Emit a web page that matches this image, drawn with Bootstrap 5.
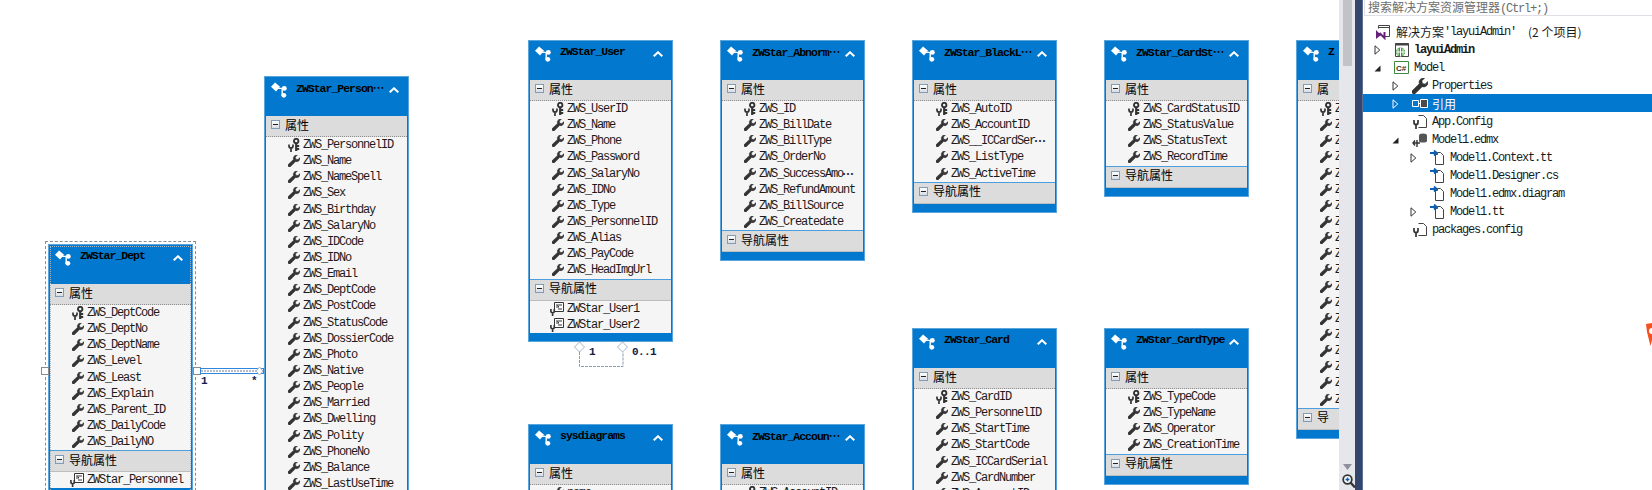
<!DOCTYPE html>
<html lang="zh-CN">
<head>
<meta charset="utf-8">
<title>Model1.edmx</title>
<link href="https://cdn.jsdelivr.net/npm/bootstrap@5.3.0/dist/css/bootstrap.min.css" rel="stylesheet">
<style>
html,body{height:490px;overflow:hidden;background:#fff}
body{font-family:"Liberation Mono","Noto Sans CJK SC",monospace;font-size:12px;letter-spacing:-1.2px;line-height:1;color:#111}
.shell{width:1652px;height:490px}
.canvas-area{width:1339px;height:490px}
.ent{width:145px;background:#0279cf;border:1px solid #5aa5dc;padding:0 1px 8px}
.at-dept{left:48px;top:244px}.at-person{left:264px;top:76px}.at-user{left:528px;top:40px}
.at-abn{left:720px;top:40px}.at-black{left:912px;top:40px}.at-cardst{left:1104px;top:40px}
.at-right{left:1296px;top:40px}.at-card{left:912px;top:328px}.at-cardtype{left:1104px;top:328px}
.at-sys{left:528px;top:424px}.at-acct{left:720px;top:424px}
.sel-frame{left:45px;top:241px;width:151px;height:260px;border:1px dashed #8d8d8d}
.sel-inner{left:50px;top:246px;width:141px;height:250px;border:1px dotted #a9b6c2}
.head{height:39px;padding:5px 0 0 5px}
.glyph{width:16px;height:16px;flex:none}
.title{width:93px;margin:0 0 0 9px;font-weight:700;color:#000;font-size:11.5px;letter-spacing:-1px;height:13px;flex:none}
.chev{width:10px;height:6px;margin:5px 0 0 0;flex:none}
.sec{height:17px;padding:0 0 3px 5px;background:#dcdcdc;font-family:"Noto Sans CJK SC",sans-serif;font-size:12px;letter-spacing:0;color:#000;border-bottom:1px dotted #8f8f8f;box-sizing:content-box}
.sec2{border-top:1px solid #4c9fdc;border-bottom:1px solid #bdbdbd}
.minus{width:9px;height:9px;border:1px solid #7f9db9;background:linear-gradient(#fff,#d8dde3);margin-right:5px;flex:none}
.minus::before{content:"";width:5px;height:1px;background:#222}
.rows{background:#f5f5f5}
.rw{height:16.15px;padding-left:22px;color:#1b1b1b;white-space:nowrap}
.ic{width:12px;height:12px;margin-right:3px;flex:none}
.ick{width:12px;height:14px;margin-right:3px;flex:none}
.icn{width:14px;height:14px;margin:0 3px 0 -2px;flex:none}
.dots{font-family:"Noto Sans CJK SC",sans-serif;letter-spacing:0;font-weight:700;margin-left:-1px}
.ttl-dots{font-family:"Noto Sans CJK SC",sans-serif;letter-spacing:0}
.overlay{left:0;top:0;width:1339px;height:490px;pointer-events:none}
.lbl{font-size:11px;font-weight:700;fill:#10204a;letter-spacing:-.6px;font-family:"Liberation Mono",monospace}
.vbar{width:16px;height:490px;background:#e6e7ed;padding-left:4px}
.thumb{width:9px;height:66px;background:#c2c3c9}
.arr-d{left:4px;top:464px;width:9px;height:6px}
.zoom-i{left:3px;top:474px;width:14px;height:15px}
.split{width:8px;height:490px;background:#35466d;border-right:1px solid #5c6f97}
.expl{width:289px;height:490px;background:#fff}
.sbox{height:16px;margin-left:1px;padding:0 0 0 3px;border:1px solid #dfe0e6;border-top:0;border-right:0;color:#6d6d6d;font-size:12px;line-height:14px}
.cj{font-family:"Noto Sans CJK SC",sans-serif;letter-spacing:0}
.tree{margin-top:6px}
.ti{height:18px;padding-top:2px;white-space:nowrap;color:#1a1a1a}
.lv0{padding-left:11px}.lv1{padding-left:29px}.lv2{padding-left:47px}.lvs{padding-left:11px}
.tw{width:18px;height:16px;flex:none}
.tw svg{width:7px;height:10px}
.tic{width:22px;height:16px;flex:none;padding-left:2px}
.tic svg{width:16px;height:16px}
.tisel{background:#0279cf;color:#fff}
.tb{font-weight:700}
.tgap{margin-left:12px}
.orange{right:0;top:323px;width:6px;height:23px}
</style>
</head>
<body>
<svg width="0" height="0" class="position-absolute">
<symbol id="w" viewBox="0 0 12 12"><path fill="#333" stroke="#333" stroke-width=".5" d="M8.600 0a3.300 3.300 0 0 0-3.100 4.400L.4 9.300a1.500 1.500 0 0 0 2.200 2.200L7.600 6.500A3.300 3.300 0 0 0 11.900 2.600L9.900 4.600 7.800 4.200 7.400 2.100 9.400.1A3 3 0 0 0 8.600 0z"/></symbol>
<symbol id="k" viewBox="0 0 12 14"><g fill="none" stroke="#333"><circle cx="8.200" cy="3" r="2.200" stroke-width="1.900"/><path stroke-width="2.200" d="M8.200 5v8M8.200 8h3M8.200 11h3"/><path stroke-width="1.700" d="M1 6.500v1.600a2 2 0 0 0 4 0V6.500M3 10v4"/></g></symbol>
<symbol id="n" viewBox="0 0 14 14"><g fill="none" stroke="#333"><path fill="#fff" d="M4.500.5h9v9h-9z"/><path d="M6 3h6M6 5h3L7.500 3.500M8 7h4"/><path stroke-width="1.600" d="M.9 7v2a1.700 1.700 0 0 0 3.400 0V7M2.600 10.500V14"/></g></symbol>
<symbol id="g" viewBox="0 0 15 15"><g fill="#fff"><path d="M0 4.500 3.800.5l4.700 4-3.800 4.500z"/><circle cx="12.500" cy="6" r="2.300"/><circle cx="12" cy="12.500" r="2.300"/></g><path fill="none" stroke="#fff" stroke-width="1.300" d="M6 6h6M10.500 6v6.500"/></symbol>
<symbol id="c" viewBox="0 0 10 6"><path fill="none" stroke="#fff" stroke-width="2" d="M.7 5.300 5 1.300l4.300 4"/></symbol>
<symbol id="to" viewBox="0 0 7 10"><path fill="#fff" stroke="#333" d="M1 .8v8.400L5.800 5z"/></symbol>
<symbol id="tw" viewBox="0 0 7 10"><path fill="none" stroke="#fff" d="M1 .8v8.400L5.800 5z"/></symbol>
<symbol id="tf" viewBox="0 0 7 10"><path fill="#222" d="M.5 8.500 6.500 2.500v6z"/></symbol>
<symbol id="fl" viewBox="0 0 16 16"><path fill="#fff" stroke="#444" d="M6.500 1.500h5l3 3v9h-8"/><path fill="none" stroke="#333" stroke-width="1.700" d="M2 6v2.500a2 2 0 0 0 4 0V6M4 11v4"/></symbol>
<symbol id="tt" viewBox="0 0 16 16"><path fill="#fff" stroke="#444" d="M5.500 4.500h2V2.500h3l3 3v9h-8z"/><path fill="none" stroke="#0f5fb0" stroke-width="1.800" d="M0 3h6M4 .5 6.800 3 4 5.500"/></symbol>
</svg>
<div class="shell d-flex">
<main class="canvas-area position-relative overflow-hidden flex-none">
<div class="position-absolute sel-frame"></div>
<section class="ent position-absolute at-dept">
<div class="head d-flex"><svg class="glyph"><use href="#g"/></svg><div class="title text-nowrap">ZWStar_Dept</div><svg class="chev"><use href="#c"/></svg></div>
<div class="sec d-flex align-items-center"><span class="minus d-flex align-items-center justify-content-center"></span>属性</div>
<div class="rows">
<div class="rw d-flex align-items-center"><svg class="ick"><use href="#k"/></svg>ZWS_DeptCode</div>
<div class="rw d-flex align-items-center"><svg class="ic"><use href="#w"/></svg>ZWS_DeptNo</div>
<div class="rw d-flex align-items-center"><svg class="ic"><use href="#w"/></svg>ZWS_DeptName</div>
<div class="rw d-flex align-items-center"><svg class="ic"><use href="#w"/></svg>ZWS_Level</div>
<div class="rw d-flex align-items-center"><svg class="ic"><use href="#w"/></svg>ZWS_Least</div>
<div class="rw d-flex align-items-center"><svg class="ic"><use href="#w"/></svg>ZWS_Explain</div>
<div class="rw d-flex align-items-center"><svg class="ic"><use href="#w"/></svg>ZWS_Parent_ID</div>
<div class="rw d-flex align-items-center"><svg class="ic"><use href="#w"/></svg>ZWS_DailyCode</div>
<div class="rw d-flex align-items-center"><svg class="ic"><use href="#w"/></svg>ZWS_DailyNO</div>
</div>
<div class="sec sec2 d-flex align-items-center"><span class="minus d-flex align-items-center justify-content-center"></span>导航属性</div>
<div class="rows">
<div class="rw d-flex align-items-center"><svg class="icn"><use href="#n"/></svg>ZWStar_Personnel</div>
</div>
</section>
<div class="position-absolute sel-inner"></div>
<section class="ent position-absolute at-person">
<div class="head d-flex"><svg class="glyph"><use href="#g"/></svg><div class="title text-nowrap">ZWStar_Person<span class="ttl-dots">…</span></div><svg class="chev"><use href="#c"/></svg></div>
<div class="sec d-flex align-items-center"><span class="minus d-flex align-items-center justify-content-center"></span>属性</div>
<div class="rows">
<div class="rw d-flex align-items-center"><svg class="ick"><use href="#k"/></svg>ZWS_PersonnelID</div>
<div class="rw d-flex align-items-center"><svg class="ic"><use href="#w"/></svg>ZWS_Name</div>
<div class="rw d-flex align-items-center"><svg class="ic"><use href="#w"/></svg>ZWS_NameSpell</div>
<div class="rw d-flex align-items-center"><svg class="ic"><use href="#w"/></svg>ZWS_Sex</div>
<div class="rw d-flex align-items-center"><svg class="ic"><use href="#w"/></svg>ZWS_Birthday</div>
<div class="rw d-flex align-items-center"><svg class="ic"><use href="#w"/></svg>ZWS_SalaryNo</div>
<div class="rw d-flex align-items-center"><svg class="ic"><use href="#w"/></svg>ZWS_IDCode</div>
<div class="rw d-flex align-items-center"><svg class="ic"><use href="#w"/></svg>ZWS_IDNo</div>
<div class="rw d-flex align-items-center"><svg class="ic"><use href="#w"/></svg>ZWS_Email</div>
<div class="rw d-flex align-items-center"><svg class="ic"><use href="#w"/></svg>ZWS_DeptCode</div>
<div class="rw d-flex align-items-center"><svg class="ic"><use href="#w"/></svg>ZWS_PostCode</div>
<div class="rw d-flex align-items-center"><svg class="ic"><use href="#w"/></svg>ZWS_StatusCode</div>
<div class="rw d-flex align-items-center"><svg class="ic"><use href="#w"/></svg>ZWS_DossierCode</div>
<div class="rw d-flex align-items-center"><svg class="ic"><use href="#w"/></svg>ZWS_Photo</div>
<div class="rw d-flex align-items-center"><svg class="ic"><use href="#w"/></svg>ZWS_Native</div>
<div class="rw d-flex align-items-center"><svg class="ic"><use href="#w"/></svg>ZWS_People</div>
<div class="rw d-flex align-items-center"><svg class="ic"><use href="#w"/></svg>ZWS_Married</div>
<div class="rw d-flex align-items-center"><svg class="ic"><use href="#w"/></svg>ZWS_Dwelling</div>
<div class="rw d-flex align-items-center"><svg class="ic"><use href="#w"/></svg>ZWS_Polity</div>
<div class="rw d-flex align-items-center"><svg class="ic"><use href="#w"/></svg>ZWS_PhoneNo</div>
<div class="rw d-flex align-items-center"><svg class="ic"><use href="#w"/></svg>ZWS_Balance</div>
<div class="rw d-flex align-items-center"><svg class="ic"><use href="#w"/></svg>ZWS_LastUseTime</div>
</div>
</section>
<section class="ent position-absolute at-user">
<div class="head d-flex"><svg class="glyph"><use href="#g"/></svg><div class="title text-nowrap">ZWStar_User</div><svg class="chev"><use href="#c"/></svg></div>
<div class="sec d-flex align-items-center"><span class="minus d-flex align-items-center justify-content-center"></span>属性</div>
<div class="rows">
<div class="rw d-flex align-items-center"><svg class="ick"><use href="#k"/></svg>ZWS_UserID</div>
<div class="rw d-flex align-items-center"><svg class="ic"><use href="#w"/></svg>ZWS_Name</div>
<div class="rw d-flex align-items-center"><svg class="ic"><use href="#w"/></svg>ZWS_Phone</div>
<div class="rw d-flex align-items-center"><svg class="ic"><use href="#w"/></svg>ZWS_Password</div>
<div class="rw d-flex align-items-center"><svg class="ic"><use href="#w"/></svg>ZWS_SalaryNo</div>
<div class="rw d-flex align-items-center"><svg class="ic"><use href="#w"/></svg>ZWS_IDNo</div>
<div class="rw d-flex align-items-center"><svg class="ic"><use href="#w"/></svg>ZWS_Type</div>
<div class="rw d-flex align-items-center"><svg class="ic"><use href="#w"/></svg>ZWS_PersonnelID</div>
<div class="rw d-flex align-items-center"><svg class="ic"><use href="#w"/></svg>ZWS_Alias</div>
<div class="rw d-flex align-items-center"><svg class="ic"><use href="#w"/></svg>ZWS_PayCode</div>
<div class="rw d-flex align-items-center"><svg class="ic"><use href="#w"/></svg>ZWS_HeadImgUrl</div>
</div>
<div class="sec sec2 d-flex align-items-center"><span class="minus d-flex align-items-center justify-content-center"></span>导航属性</div>
<div class="rows">
<div class="rw d-flex align-items-center"><svg class="icn"><use href="#n"/></svg>ZWStar_User1</div>
<div class="rw d-flex align-items-center"><svg class="icn"><use href="#n"/></svg>ZWStar_User2</div>
</div>
</section>
<section class="ent position-absolute at-abn">
<div class="head d-flex"><svg class="glyph"><use href="#g"/></svg><div class="title text-nowrap">ZWStar_Abnorm<span class="ttl-dots">…</span></div><svg class="chev"><use href="#c"/></svg></div>
<div class="sec d-flex align-items-center"><span class="minus d-flex align-items-center justify-content-center"></span>属性</div>
<div class="rows">
<div class="rw d-flex align-items-center"><svg class="ick"><use href="#k"/></svg>ZWS_ID</div>
<div class="rw d-flex align-items-center"><svg class="ic"><use href="#w"/></svg>ZWS_BillDate</div>
<div class="rw d-flex align-items-center"><svg class="ic"><use href="#w"/></svg>ZWS_BillType</div>
<div class="rw d-flex align-items-center"><svg class="ic"><use href="#w"/></svg>ZWS_OrderNo</div>
<div class="rw d-flex align-items-center"><svg class="ic"><use href="#w"/></svg>ZWS_SuccessAmo<span class="dots">…</span></div>
<div class="rw d-flex align-items-center"><svg class="ic"><use href="#w"/></svg>ZWS_RefundAmount</div>
<div class="rw d-flex align-items-center"><svg class="ic"><use href="#w"/></svg>ZWS_BillSource</div>
<div class="rw d-flex align-items-center"><svg class="ic"><use href="#w"/></svg>ZWS_Createdate</div>
</div>
<div class="sec sec2 d-flex align-items-center"><span class="minus d-flex align-items-center justify-content-center"></span>导航属性</div>
</section>
<section class="ent position-absolute at-black">
<div class="head d-flex"><svg class="glyph"><use href="#g"/></svg><div class="title text-nowrap">ZWStar_BlackL<span class="ttl-dots">…</span></div><svg class="chev"><use href="#c"/></svg></div>
<div class="sec d-flex align-items-center"><span class="minus d-flex align-items-center justify-content-center"></span>属性</div>
<div class="rows">
<div class="rw d-flex align-items-center"><svg class="ick"><use href="#k"/></svg>ZWS_AutoID</div>
<div class="rw d-flex align-items-center"><svg class="ic"><use href="#w"/></svg>ZWS_AccountID</div>
<div class="rw d-flex align-items-center"><svg class="ic"><use href="#w"/></svg>ZWS__ICCardSer<span class="dots">…</span></div>
<div class="rw d-flex align-items-center"><svg class="ic"><use href="#w"/></svg>ZWS_ListType</div>
<div class="rw d-flex align-items-center"><svg class="ic"><use href="#w"/></svg>ZWS_ActiveTime</div>
</div>
<div class="sec sec2 d-flex align-items-center"><span class="minus d-flex align-items-center justify-content-center"></span>导航属性</div>
</section>
<section class="ent position-absolute at-cardst">
<div class="head d-flex"><svg class="glyph"><use href="#g"/></svg><div class="title text-nowrap">ZWStar_CardSt<span class="ttl-dots">…</span></div><svg class="chev"><use href="#c"/></svg></div>
<div class="sec d-flex align-items-center"><span class="minus d-flex align-items-center justify-content-center"></span>属性</div>
<div class="rows">
<div class="rw d-flex align-items-center"><svg class="ick"><use href="#k"/></svg>ZWS_CardStatusID</div>
<div class="rw d-flex align-items-center"><svg class="ic"><use href="#w"/></svg>ZWS_StatusValue</div>
<div class="rw d-flex align-items-center"><svg class="ic"><use href="#w"/></svg>ZWS_StatusText</div>
<div class="rw d-flex align-items-center"><svg class="ic"><use href="#w"/></svg>ZWS_RecordTime</div>
</div>
<div class="sec sec2 d-flex align-items-center"><span class="minus d-flex align-items-center justify-content-center"></span>导航属性</div>
</section>
<section class="ent position-absolute at-right">
<div class="head d-flex"><svg class="glyph"><use href="#g"/></svg><div class="title text-nowrap">Z</div><svg class="chev"><use href="#c"/></svg></div>
<div class="sec d-flex align-items-center"><span class="minus d-flex align-items-center justify-content-center"></span>属</div>
<div class="rows">
<div class="rw d-flex align-items-center"><svg class="ick"><use href="#k"/></svg>Z</div>
<div class="rw d-flex align-items-center"><svg class="ic"><use href="#w"/></svg>Z</div>
<div class="rw d-flex align-items-center"><svg class="ic"><use href="#w"/></svg>Z</div>
<div class="rw d-flex align-items-center"><svg class="ic"><use href="#w"/></svg>Z</div>
<div class="rw d-flex align-items-center"><svg class="ic"><use href="#w"/></svg>Z</div>
<div class="rw d-flex align-items-center"><svg class="ic"><use href="#w"/></svg>Z</div>
<div class="rw d-flex align-items-center"><svg class="ic"><use href="#w"/></svg>Z</div>
<div class="rw d-flex align-items-center"><svg class="ic"><use href="#w"/></svg>Z</div>
<div class="rw d-flex align-items-center"><svg class="ic"><use href="#w"/></svg>Z</div>
<div class="rw d-flex align-items-center"><svg class="ic"><use href="#w"/></svg>Z</div>
<div class="rw d-flex align-items-center"><svg class="ic"><use href="#w"/></svg>Z</div>
<div class="rw d-flex align-items-center"><svg class="ic"><use href="#w"/></svg>Z</div>
<div class="rw d-flex align-items-center"><svg class="ic"><use href="#w"/></svg>Z</div>
<div class="rw d-flex align-items-center"><svg class="ic"><use href="#w"/></svg>Z</div>
<div class="rw d-flex align-items-center"><svg class="ic"><use href="#w"/></svg>Z</div>
<div class="rw d-flex align-items-center"><svg class="ic"><use href="#w"/></svg>Z</div>
<div class="rw d-flex align-items-center"><svg class="ic"><use href="#w"/></svg>Z</div>
<div class="rw d-flex align-items-center"><svg class="ic"><use href="#w"/></svg>Z</div>
<div class="rw d-flex align-items-center"><svg class="ic"><use href="#w"/></svg>Z</div>
</div>
<div class="sec sec2 d-flex align-items-center"><span class="minus d-flex align-items-center justify-content-center"></span>导</div>
</section>
<section class="ent position-absolute at-card">
<div class="head d-flex"><svg class="glyph"><use href="#g"/></svg><div class="title text-nowrap">ZWStar_Card</div><svg class="chev"><use href="#c"/></svg></div>
<div class="sec d-flex align-items-center"><span class="minus d-flex align-items-center justify-content-center"></span>属性</div>
<div class="rows">
<div class="rw d-flex align-items-center"><svg class="ick"><use href="#k"/></svg>ZWS_CardID</div>
<div class="rw d-flex align-items-center"><svg class="ic"><use href="#w"/></svg>ZWS_PersonnelID</div>
<div class="rw d-flex align-items-center"><svg class="ic"><use href="#w"/></svg>ZWS_StartTime</div>
<div class="rw d-flex align-items-center"><svg class="ic"><use href="#w"/></svg>ZWS_StartCode</div>
<div class="rw d-flex align-items-center"><svg class="ic"><use href="#w"/></svg>ZWS_ICCardSerial</div>
<div class="rw d-flex align-items-center"><svg class="ic"><use href="#w"/></svg>ZWS_CardNumber</div>
<div class="rw d-flex align-items-center"><svg class="ic"><use href="#w"/></svg>ZWS_AccountID</div>
<div class="rw d-flex align-items-center"></div>
</div>
</section>
<section class="ent position-absolute at-cardtype">
<div class="head d-flex"><svg class="glyph"><use href="#g"/></svg><div class="title text-nowrap">ZWStar_CardType</div><svg class="chev"><use href="#c"/></svg></div>
<div class="sec d-flex align-items-center"><span class="minus d-flex align-items-center justify-content-center"></span>属性</div>
<div class="rows">
<div class="rw d-flex align-items-center"><svg class="ick"><use href="#k"/></svg>ZWS_TypeCode</div>
<div class="rw d-flex align-items-center"><svg class="ic"><use href="#w"/></svg>ZWS_TypeName</div>
<div class="rw d-flex align-items-center"><svg class="ic"><use href="#w"/></svg>ZWS_Operator</div>
<div class="rw d-flex align-items-center"><svg class="ic"><use href="#w"/></svg>ZWS_CreationTime</div>
</div>
<div class="sec sec2 d-flex align-items-center"><span class="minus d-flex align-items-center justify-content-center"></span>导航属性</div>
</section>
<section class="ent position-absolute at-sys">
<div class="head d-flex"><svg class="glyph"><use href="#g"/></svg><div class="title text-nowrap">sysdiagrams</div><svg class="chev"><use href="#c"/></svg></div>
<div class="sec d-flex align-items-center"><span class="minus d-flex align-items-center justify-content-center"></span>属性</div>
<div class="rows">
<div class="rw d-flex align-items-center"><svg class="ic"><use href="#w"/></svg>name</div>
<div class="rw d-flex align-items-center"></div>
</div>
</section>
<section class="ent position-absolute at-acct">
<div class="head d-flex"><svg class="glyph"><use href="#g"/></svg><div class="title text-nowrap">ZWStar_Accoun<span class="ttl-dots">…</span></div><svg class="chev"><use href="#c"/></svg></div>
<div class="sec d-flex align-items-center"><span class="minus d-flex align-items-center justify-content-center"></span>属性</div>
<div class="rows">
<div class="rw d-flex align-items-center"><svg class="ick"><use href="#k"/></svg>ZWS_AccountID</div>
<div class="rw d-flex align-items-center"></div>
</div>
</section>
<svg class="overlay position-absolute" viewBox="0 0 1339 490">
<g fill="#fff" stroke="#8a8a8a"><rect x="41.500" y="367.500" width="7" height="7"/><rect x="193.500" y="367.500" width="7" height="7"/></g>
<rect x="200.500" y="368.500" width="63" height="5" fill="#fff" stroke="#2f86dc"/>
<path d="M201 371h56" stroke="#b4bcc6" stroke-width="2" stroke-dasharray="2 1"/>
<path d="M259.500 367l3.500 4-3.500 4-3.500-4z" fill="#fff" stroke="#9fb2c6"/>
<text class="lbl" x="201" y="384">1</text><text class="lbl" x="251" y="384">*</text>
<path d="M579.500 352v14.500h43.500V352" fill="none" stroke="#8a9bb0" stroke-dasharray="3 1"/>
<g fill="#fff" stroke="#a7b4c3"><path d="M579.500 342l5 5-5 5-5-5z"/><path d="M622.500 342l5 5-5 5-5-5z"/></g>
<text class="lbl" x="589" y="355">1</text><text class="lbl" x="632" y="355">0..1</text>
</svg>
</main>
<div class="vbar position-relative flex-none">
<div class="thumb"></div>
<svg class="arr-d position-absolute" viewBox="0 0 9 6"><path fill="#8f909c" d="M0 0h9L4.500 6z"/></svg>
<svg class="zoom-i position-absolute" viewBox="0 0 14 15"><circle cx="5.500" cy="5.500" r="4.300" fill="#fff" stroke="#333" stroke-width="1.800"/><path stroke="#333" stroke-width="2.400" d="M8.500 8.500l4.500 5"/><path stroke="#0f5fb0" stroke-width="1.500" d="M3.500 5.500h4M5.500 3.500v4"/></svg>
</div>
<div class="split flex-none"></div>
<aside class="expl position-relative flex-none">
<div class="sbox"><span class="cj">搜索解决方案资源管理器</span>(Ctrl+;)</div>
<div class="tree">
<div class="ti lvs d-flex align-items-center"><span class="tic d-flex"><svg viewBox="0 0 16 16"><path fill="none" stroke="#444" d="M2.500 4.500v-3h11v11h-6"/><path stroke="#444" d="M3 3.500h10"/><path fill="none" stroke="#68217a" stroke-width="2" d="M1 8.500v4.500l2.500-2zM8.500 8v6L3.500 9"/></svg></span><span class="cj">解决方案</span><span>'layuiAdmin'</span><span class="cj tgap">(2 个项目)</span></div>
<div class="ti lv0 d-flex align-items-center"><span class="tw d-flex align-items-center"><svg><use href="#to"/></svg></span><span class="tic d-flex"><svg viewBox="0 0 16 16"><path fill="none" stroke="#444" d="M1.500 1.500h13v13h-13z"/><path d="M1 2.500h14" stroke="#444" stroke-width="2"/><circle cx="6.500" cy="10" r="4.500" fill="#3c9a3c"/><path fill="none" stroke="#fff" d="M2 10h9M6.500 5.500v9M4 6.500v7M9 6.500v7"/></svg></span><span class="tb">layuiAdmin</span></div>
<div class="ti lv0 d-flex align-items-center"><span class="tw d-flex align-items-center"><svg><use href="#tf"/></svg></span><span class="tic d-flex"><svg viewBox="0 0 16 16"><path fill="#fff" stroke="#3c8a3c" d="M.500 1.500h14v12H.500z"/><text x="2" y="11" font-size="8" font-weight="700" fill="#333" letter-spacing="0" font-family="Liberation Sans">C#</text></svg></span><span>Model</span></div>
<div class="ti lv1 d-flex align-items-center"><span class="tw d-flex align-items-center"><svg><use href="#to"/></svg></span><span class="tic d-flex"><svg viewBox="0 0 12 12"><use href="#w"/></svg></span><span>Properties</span></div>
<div class="ti lv1 tisel d-flex align-items-center"><span class="tw d-flex align-items-center"><svg><use href="#tw"/></svg></span><span class="tic d-flex"><svg viewBox="0 0 16 16"><path fill="none" stroke="#fff" d="M.500 4.500h6v6h-6z"/><path stroke="#fff" d="M7 7.500h2"/><path fill="#4a4a4a" stroke="#fff" d="M8.500 3.500h7v8h-7z"/></svg></span><span class="cj">引用</span></div>
<div class="ti lv1 d-flex align-items-center"><span class="tw"></span><span class="tic d-flex"><svg><use href="#fl"/></svg></span><span>App.Config</span></div>
<div class="ti lv1 d-flex align-items-center"><span class="tw d-flex align-items-center"><svg><use href="#tf"/></svg></span><span class="tic d-flex"><svg viewBox="0 0 16 16"><ellipse cx="11" cy="3.500" rx="4" ry="2" fill="#555"/><path fill="#555" d="M7 4v5c0 2 8 2 8 0V4"/><path fill="none" stroke="#333" stroke-width="1.400" d="M1 11h7M3 8.500 1 11l2 2.500M5 8v7"/></svg></span><span>Model1.edmx</span></div>
<div class="ti lv2 d-flex align-items-center"><span class="tw d-flex align-items-center"><svg><use href="#to"/></svg></span><span class="tic d-flex"><svg><use href="#tt"/></svg></span><span>Model1.Context.tt</span></div>
<div class="ti lv2 d-flex align-items-center"><span class="tw"></span><span class="tic d-flex"><svg><use href="#tt"/></svg></span><span>Model1.Designer.cs</span></div>
<div class="ti lv2 d-flex align-items-center"><span class="tw"></span><span class="tic d-flex"><svg><use href="#tt"/></svg></span><span>Model1.edmx.diagram</span></div>
<div class="ti lv2 d-flex align-items-center"><span class="tw d-flex align-items-center"><svg><use href="#to"/></svg></span><span class="tic d-flex"><svg><use href="#tt"/></svg></span><span>Model1.tt</span></div>
<div class="ti lv1 d-flex align-items-center"><span class="tw"></span><span class="tic d-flex"><svg><use href="#fl"/></svg></span><span>packages.config</span></div>
</div>
<svg class="orange position-absolute" viewBox="0 0 6 23"><path fill="#f4511e" d="M0 1 6 0V5a3 3 0 0 0 0 6v6l-1.500 6L1 9z"/></svg>
</aside>
</div>
</body>
</html>
